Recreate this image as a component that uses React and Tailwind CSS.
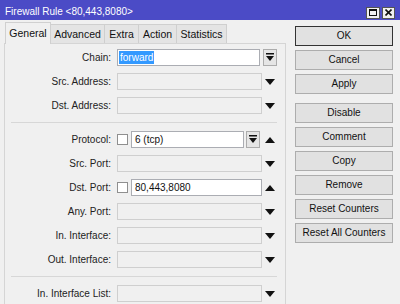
import React from "react";

const DownArrow = () => (
  <svg width="10" height="6" viewBox="0 0 10 6"><path d="M0 0 H10 L5 6 Z" fill="#111" /></svg>
);
const UpArrow = () => (
  <svg width="10" height="6" viewBox="0 0 10 6"><path d="M0 6 H10 L5 0 Z" fill="#111" /></svg>
);
const DropBtn = () => (
  <div className="w-[14px] h-[17px] border border-[#acacac] bg-[#e5e5e5] flex items-center justify-center">
    <svg width="8" height="9" viewBox="0 0 8 9">
      <rect x="0" y="0" width="8" height="1.5" fill="#111" />
      <path d="M0 3 H8 L4 8 Z" fill="#111" />
    </svg>
  </div>
);

const Label = ({ children }) => (
  <div className="w-[106px] shrink-0 text-right text-[#222] whitespace-nowrap">{children}</div>
);

const Row = ({ label, children, trail }) => (
  <div className="flex items-center h-[17px]">
    <Label>{label}</Label>
    <div className="ml-[6px] flex items-center w-[145px] h-[17px]">{children}</div>
    <div className="w-[16px] flex items-center justify-center">{trail}</div>
  </div>
);

const GrayField = () => (
  <div className="w-full h-[17px] border border-[#cfcfcf] bg-[#f0f0f0]" />
);

const Check = () => (
  <div className="w-[11px] h-[11px] shrink-0 border border-[#8f8f8f] bg-white mr-[3px]" />
);

const Sep = () => (
  <div className="h-[3px] flex items-center pl-[6px] pr-[8px]">
    <div className="w-full border-t border-[#d7d7d7]" />
  </div>
);

const Btn = ({ children, ok }) => (
  <div
    className={`h-[20px] flex items-center justify-center bg-[#e1e1e1] text-[#111] ${
      ok ? "border border-[#333]" : "border border-[#adadad]"
    }`}
  >
    {children}
  </div>
);

const tabs = [
  { t: "General", w: "w-[46px]" },
  { t: "Advanced", w: "w-[54px]" },
  { t: "Extra", w: "w-[34px]" },
  { t: "Action", w: "w-[38px]" },
  { t: "Statistics", w: "w-[50px]" },
];

export default function App() {
  return (
    <div
      className="w-[400px] h-[304px] overflow-hidden bg-[#f0f0f0] text-[10px] leading-none"
      style={{ fontFamily: '"Liberation Sans", Arial, sans-serif' }}
    >
      {/* title bar */}
      <div className="h-[20px] bg-[#4b4bc6] flex items-center justify-between pl-[5px] pr-[5px]">
        <div className="text-white text-[10px] pt-[4px]">Firewall Rule &lt;80,443,8080&gt;</div>
        <div className="flex gap-[2px] pt-[5px]">
          <div className="w-[14px] h-[12px] bg-[#f0f0f0] border border-[#555] flex items-center justify-center">
            <div className="w-[8px] h-[7px] border border-[#111] border-t-2" />
          </div>
          <div className="w-[13px] h-[12px] bg-[#f0f0f0] border border-[#555] flex items-center justify-center">
            <svg width="7" height="7" viewBox="0 0 7 7">
              <path d="M0.5 0.5 L6.5 6.5 M6.5 0.5 L0.5 6.5" stroke="#111" strokeWidth="1.6" />
            </svg>
          </div>
        </div>
      </div>

      <div className="flex">
        {/* left: tabs + panel */}
        <div className="pl-[4px] w-[290px]">
          <div className="flex items-end h-[23px] pl-[1px]">
            {tabs.map((tb, i) =>
              i === 0 ? (
                <div
                  key={tb.t}
                  className={`${tb.w} h-[22px] bg-[#f0f0f0] border border-[#d0d0d0] border-b-0 flex items-center justify-center text-[10.5px] text-[#111] relative z-10 -mb-px`}
                >
                  {tb.t}
                </div>
              ) : (
                <div
                  key={tb.t}
                  className={`${tb.w} h-[19px] bg-[#e4e4e4] border border-[#cfcfcf] border-l-0 border-b-0 flex items-center justify-center text-[10.5px] text-[#111]`}
                >
                  {tb.t}
                </div>
              )
            )}
          </div>
          <div className="w-[282px] h-[270px] border border-[#d5d5d5] pt-[5px] flex flex-col gap-[7px]">
            <Row label="Chain:" trail={<DropBtn />}>
              <div className="w-[143px] h-[17px] border border-[#abadb3] bg-white flex items-center pl-[1px]">
                <span className="bg-[#3399ff] text-white px-[1px] h-[13px] flex items-center">forward</span>
              </div>
            </Row>
            <Row label="Src. Address:" trail={<DownArrow />}>
              <GrayField />
            </Row>
            <Row label="Dst. Address:" trail={<DownArrow />}>
              <GrayField />
            </Row>
            <Sep />
            <Row label="Protocol:" trail={<UpArrow />}>
              <Check />
              <div className="w-[113px] h-[17px] border border-[#abadb3] bg-white flex items-center pl-[3px] text-[#111]">
                6 (tcp)
              </div>
              <div className="ml-[2px]">
                <DropBtn />
              </div>
            </Row>
            <Row label="Src. Port:" trail={<DownArrow />}>
              <GrayField />
            </Row>
            <Row label="Dst. Port:" trail={<UpArrow />}>
              <Check />
              <div className="flex-1 h-[17px] border border-[#abadb3] bg-white flex items-center pl-[3px] text-[#111]">
                80,443,8080
              </div>
            </Row>
            <Row label="Any. Port:" trail={<DownArrow />}>
              <GrayField />
            </Row>
            <Row label="In. Interface:" trail={<DownArrow />}>
              <GrayField />
            </Row>
            <Row label="Out. Interface:" trail={<DownArrow />}>
              <GrayField />
            </Row>
            <Sep />
            <Row label="In. Interface List:" trail={<DownArrow />}>
              <GrayField />
            </Row>
          </div>
        </div>

        {/* right buttons */}
        <div className="ml-[5px] w-[98px] pt-[6px] flex flex-col">
          <div className="flex flex-col gap-[4px]">
            <Btn ok>OK</Btn>
            <Btn>Cancel</Btn>
            <Btn>Apply</Btn>
          </div>
          <div className="flex flex-col gap-[4px] mt-[9px]">
            <Btn>Disable</Btn>
            <Btn>Comment</Btn>
            <Btn>Copy</Btn>
            <Btn>Remove</Btn>
            <Btn>Reset Counters</Btn>
            <Btn>Reset All Counters</Btn>
          </div>
        </div>
      </div>
    </div>
  );
}
